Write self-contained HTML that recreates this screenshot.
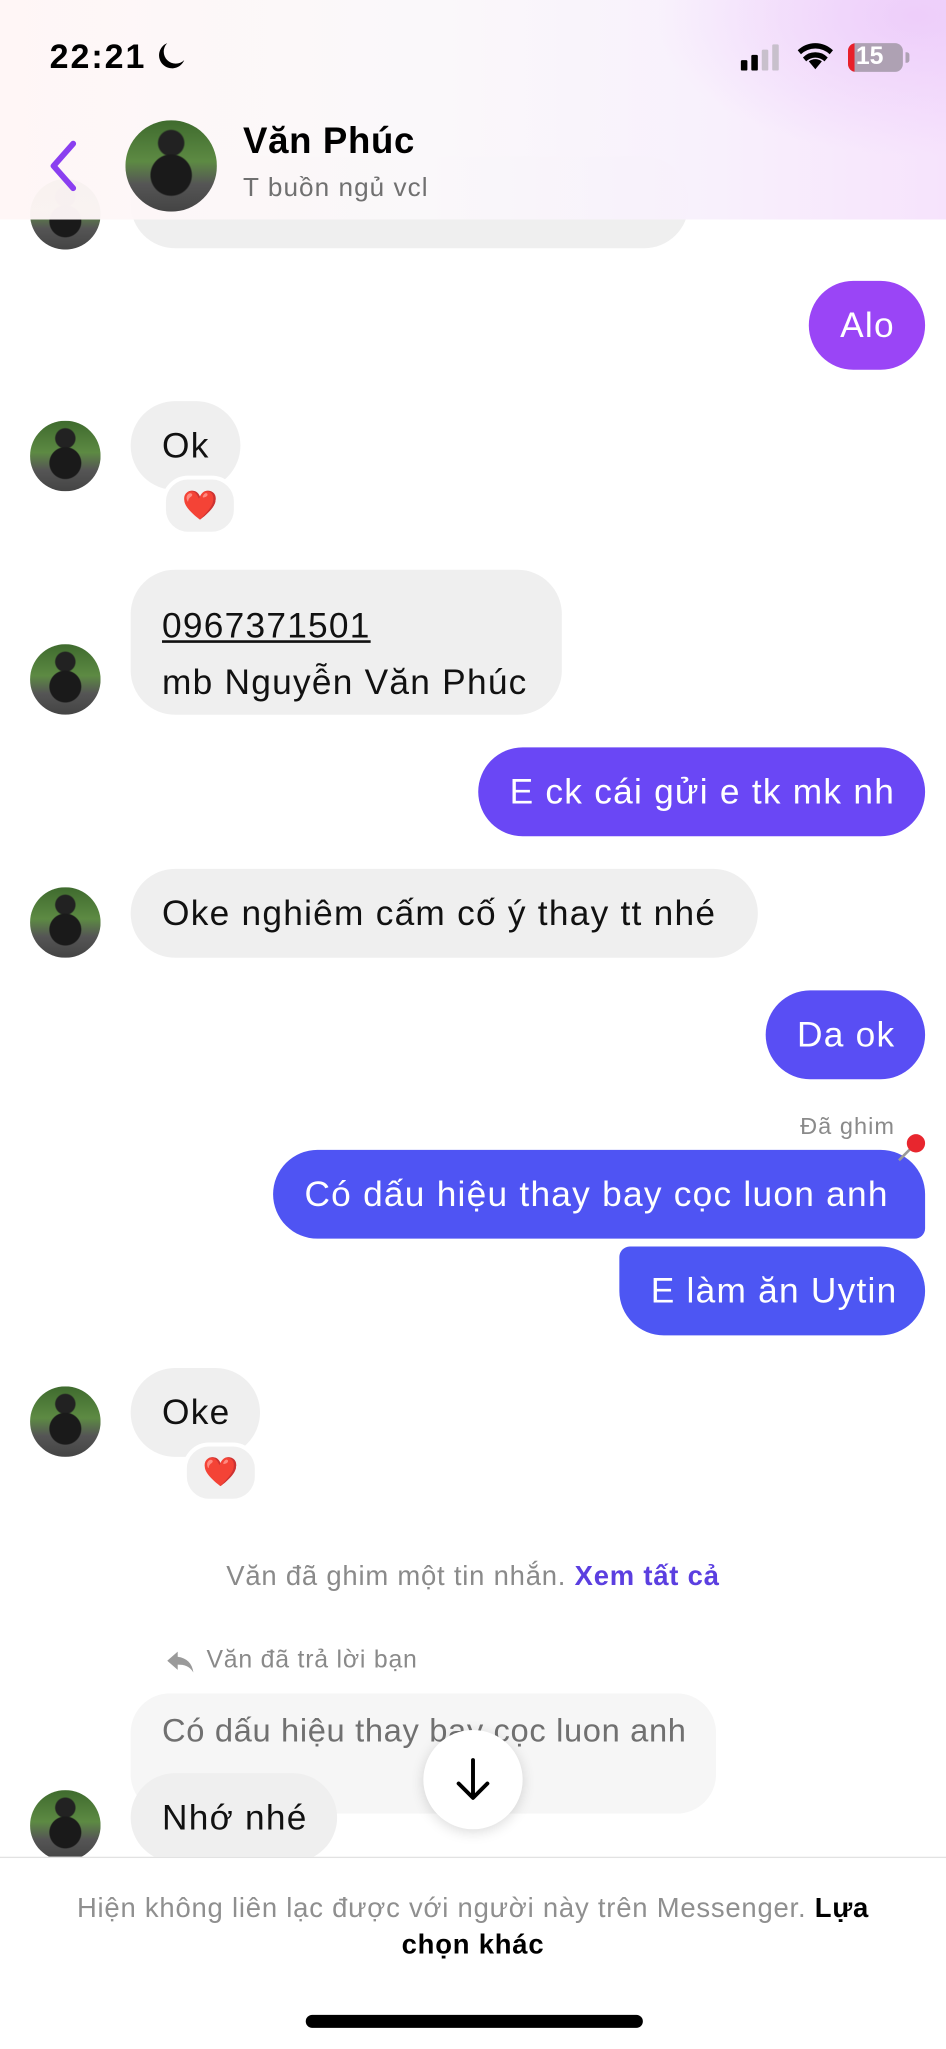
<!DOCTYPE html>
<html><head><meta charset="utf-8"><style>
html,body{margin:0;padding:0;background:#fff;width:946px;height:2048px;overflow:hidden}
#s{position:absolute;left:0;top:0;width:724px;height:1568px;transform:scale(1.30663);transform-origin:0 0;font-family:"Liberation Sans","DejaVu Sans",sans-serif;background:#fff;overflow:hidden}
.a{position:absolute}
.b{position:absolute;height:68px;border-radius:34px;font-size:27px;letter-spacing:0.95px;line-height:68px;padding:0 24px;box-sizing:border-box;white-space:nowrap}
.g{background:#efefef;color:#111}
.w{color:#fff}
.av{position:absolute;width:54px;height:54px;border-radius:50%;background:radial-gradient(circle at 50% 60%,#1a1a1a 0 28%,transparent 30%),radial-gradient(circle at 50% 25%,#222 0 15%,transparent 17%),linear-gradient(180deg,#3f6b2e 0%,#5d8a43 45%,#555 70%,#444 100%)}
.ht{position:absolute;width:52px;height:40px;border-radius:20px;background:#f0f0f0;border:3px solid #fff;font-size:22px;line-height:40px;text-align:center;color:#e0202c}
</style></head><body><div id="s">

<div class="a g" style="left:100px;top:120px;width:427px;height:70px;border-radius:34px;background:#efefef"></div>
<div class="av" style="left:23px;top:137px"></div>

<div class="a" style="left:0;top:0;width:724px;height:168px;background:linear-gradient(90deg,rgba(255,246,246,.97) 0%,rgba(250,248,250,.97) 45%,rgba(248,240,252,.97) 75%,rgba(246,226,252,.97) 100%)"></div>
<div class="a" style="left:500px;top:0;width:224px;height:120px;background:radial-gradient(ellipse at 90% 10%,rgba(235,200,250,.8),transparent 70%)"></div>
<div class="a" style="left:38px;top:28px;font-size:26px;letter-spacing:1.5px;font-weight:bold;color:#000">22:21</div>
<svg class="a" style="left:119px;top:31px" width="24" height="24" viewBox="0 0 24 24"><path d="M9 2 A10 10 0 1 0 22 15 A8 8 0 0 1 9 2Z" fill="#000"/></svg>
<div class="a" style="left:567px;top:46px;width:5px;height:8px;background:#000;border-radius:1px"></div>
<div class="a" style="left:575px;top:42px;width:5px;height:12px;background:#000;border-radius:1px"></div>
<div class="a" style="left:583px;top:38px;width:5px;height:16px;background:#c8c0cc;border-radius:1px"></div>
<div class="a" style="left:591px;top:34px;width:5px;height:20px;background:#c8c0cc;border-radius:1px"></div>
<svg class="a" style="left:610px;top:32px" width="28" height="22" viewBox="0 0 28 22"><path d="M14 21 L9 15 A8 8 0 0 1 19 15Z M14 8 A13 13 0 0 1 23.5 12 L21 15 A10 10 0 0 0 7 15 L4.5 12 A13 13 0 0 1 14 8Z M14 1 A20 20 0 0 1 27.5 6.5 L25 9.5 A16 16 0 0 0 3 9.5 L0.5 6.5 A20 20 0 0 1 14 1Z" fill="#000"/></svg>
<div class="a" style="left:649px;top:33px;width:42px;height:22px;border-radius:6px;background:#aea1b3;overflow:hidden"><div style="width:5px;height:22px;background:#e8202a"></div></div>
<div class="a" style="left:655px;top:33px;font-size:19px;font-weight:bold;color:#fff;line-height:22px">15</div>
<div class="a" style="left:693px;top:40px;width:3px;height:8px;background:#aea1b3;border-radius:0 2px 2px 0"></div>
<svg class="a" style="left:34px;top:106px" width="28" height="42" viewBox="0 0 28 42"><path d="M22 4 L7 21 L22 38" stroke="#8a3ff0" stroke-width="4.5" fill="none" stroke-linecap="round" stroke-linejoin="round"/></svg>
<div class="av" style="left:96px;top:92px;width:70px;height:70px"></div>
<div class="a" style="left:186px;top:92px;font-size:28px;letter-spacing:0.5px;font-weight:bold;color:#000">Văn Phúc</div>
<div class="a" style="left:186px;top:133px;font-size:20px;letter-spacing:0.8px;color:#707070">T buồn ngủ vcl</div>

<div class="b w" style="left:619px;top:215px;width:89px;background:#9a45f6">Alo</div>

<div class="av" style="left:23px;top:322px"></div>
<div class="b g" style="left:100px;top:307px;width:84px">Ok</div>
<div class="ht" style="left:124px;top:364px">❤️</div>

<div class="av" style="left:23px;top:493px"></div>
<div class="a g" style="left:100px;top:436px;width:330px;height:111px;border-radius:34px;font-size:27px;letter-spacing:0.95px;box-sizing:border-box;padding:22px 24px;line-height:43px;color:#111;white-space:nowrap"><u>0967371501</u><br>mb Nguyễn Văn Phúc</div>

<div class="b w" style="left:366px;top:572px;width:342px;background:#6a47f5">E ck cái gửi e tk mk nh</div>

<div class="av" style="left:23px;top:679px"></div>
<div class="b g" style="left:100px;top:665px;width:480px">Oke nghiêm cấm cố ý thay tt nhé</div>

<div class="b w" style="left:586px;top:758px;width:122px;background:#594ef4">Da ok</div>

<div class="a" style="right:39px;top:852px;font-size:18px;letter-spacing:0.8px;color:#8a8a8a">Đã ghim</div>
<div class="b w" style="left:209px;top:880px;width:499px;background:#4f54f3;border-radius:34px 34px 8px 34px">Có dấu hiệu thay bay cọc luon anh</div>
<svg class="a" style="left:684px;top:866px" width="26" height="26" viewBox="0 0 26 26"><line x1="4" y1="22" x2="14" y2="12" stroke="#999" stroke-width="2"/><circle cx="17" cy="9" r="7" fill="#e8262e"/></svg>
<div class="b w" style="left:474px;top:954px;width:234px;background:#4d56f3;border-radius:8px 34px 34px 34px">E làm ăn Uytin</div>

<div class="av" style="left:23px;top:1061px"></div>
<div class="b g" style="left:100px;top:1047px;width:99px">Oke</div>
<div class="ht" style="left:140px;top:1104px">❤️</div>

<div class="a" style="left:0;width:724px;top:1195px;text-align:center;font-size:21px;letter-spacing:0.6px;color:#8a8a8a">Văn đã ghim một tin nhắn. <span style="color:#5b3fe0;font-weight:bold">Xem tất cả</span></div>

<svg class="a" style="left:126px;top:1262px" width="24" height="20" viewBox="0 0 24 20"><path d="M10 2 L2 9 L10 16 L10 12 C15 12 19 13 22 18 C21 11 17 7 10 6Z" fill="#9a9a9a"/></svg>
<div class="a" style="left:158px;top:1260px;font-size:19px;letter-spacing:0.6px;color:#8a8a8a">Văn đã trả lời bạn</div>
<div class="a" style="left:100px;top:1296px;width:448px;height:92px;border-radius:30px;background:#f6f6f6;font-size:25px;letter-spacing:0.5px;color:#707070;box-sizing:border-box;padding:15px 24px;white-space:nowrap">Có dấu hiệu thay bay cọc luon anh</div>
<div class="av" style="left:23px;top:1370px"></div>
<div class="b g" style="left:100px;top:1357px;width:158px">Nhớ nhé</div>

<div class="a" style="left:324px;top:1324px;width:76px;height:76px;border-radius:50%;background:#fff;box-shadow:0 2px 10px rgba(0,0,0,.15)"></div>
<svg class="a" style="left:346px;top:1344px" width="32" height="36" viewBox="0 0 32 36"><path d="M16 3 V31 M5 21 L16 32 L27 21" stroke="#000" stroke-width="3" fill="none" stroke-linecap="round" stroke-linejoin="round"/></svg>

<div class="a" style="left:0;top:1421px;width:724px;height:147px;background:#fff;border-top:1px solid #e2e2e2"></div>
<div class="a" style="left:40px;width:644px;top:1447px;text-align:center;font-size:21px;letter-spacing:0.6px;line-height:28px;color:#8f8f8f">Hiện không liên lạc được với người này trên Messenger. <span style="color:#000;font-weight:bold">Lựa chọn khác</span></div>
<div class="a" style="left:234px;top:1542px;width:258px;height:10px;border-radius:5px;background:#000"></div>
</div></body></html>
